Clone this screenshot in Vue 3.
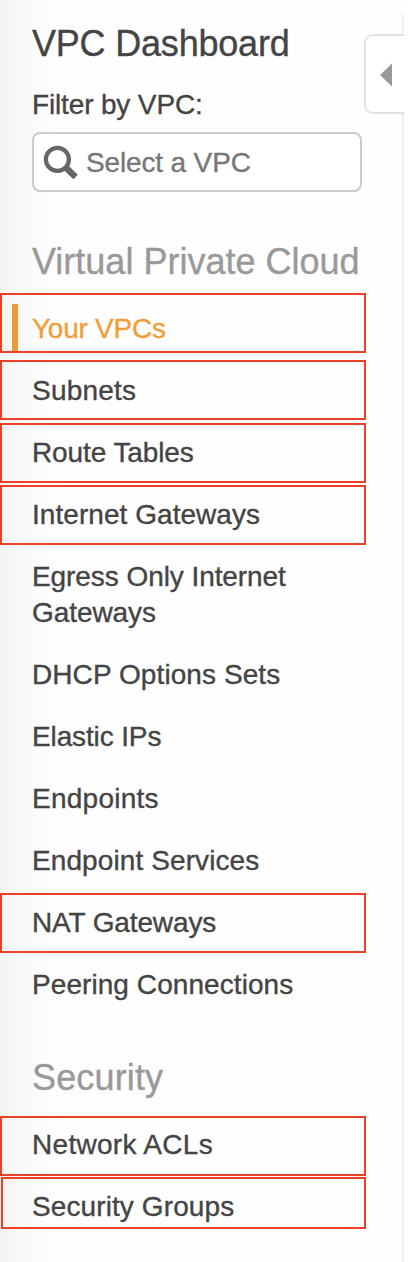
<script setup>
const vpcItems = [
  { label: 'Your VPCs', key: 'vpcs', active: true, marked: true },
  { label: 'Subnets', key: 'subnets', marked: true },
  { label: 'Route Tables', key: 'routes', marked: true },
  { label: 'Internet Gateways', key: 'igw', marked: true },
  { label: 'Egress Only Internet Gateways', key: 'egress' },
  { label: 'DHCP Options Sets', key: 'dhcp' },
  { label: 'Elastic IPs', key: 'eip' },
  { label: 'Endpoints', key: 'endpoints' },
  { label: 'Endpoint Services', key: 'services' },
  { label: 'NAT Gateways', key: 'nat', marked: true },
  { label: 'Peering Connections', key: 'peering' },
]
const securityItems = [
  { label: 'Network ACLs', key: 'acls', marked: true },
  { label: 'Security Groups', key: 'groups', marked: true },
]
const sections = [
  { title: 'Virtual Private Cloud', key: 'cloud', items: vpcItems },
  { title: 'Security', key: 'security', items: securityItems },
]
</script>

<template>
  <div class="page">
    <nav class="sidebar">
      <h1 class="title">VPC Dashboard</h1>
      <label class="filter-label" for="vpc-filter">Filter by VPC:</label>
      <div id="vpc-filter" class="search">
        <svg class="search-icon" width="36" height="36" viewBox="0 0 36 36">
          <circle cx="14.4" cy="14.4" r="11.5" fill="none" stroke="#666" stroke-width="4.2" />
          <path d="M22.6 22.4 L32.6 32" fill="none" stroke="#666" stroke-width="6.4" />
        </svg>
        <span class="placeholder">Select a VPC</span>
      </div>
      <section v-for="s in sections" :key="s.key" :class="s.key">
        <h2 class="heading">{{ s.title }}</h2>
        <ul class="list">
          <li v-for="i in s.items" :key="i.key" class="item" :class="[i.key, { active: i.active }]">
            <span>{{ i.label }}</span>
            <span v-if="i.marked" class="mark"></span>
          </li>
        </ul>
      </section>
    </nav>
    <div class="divider"></div>
    <div class="collapse">
      <svg width="12" height="24" viewBox="0 0 12 24"><path d="M0 12 L12 0.5 V23.5 Z" fill="#999" /></svg>
    </div>
  </div>
</template>

<style>
body { margin: 0; background: #fff; }
</style>

<style scoped>
.page {
  position: relative;
  width: 404px;
  height: 1262px;
  overflow: hidden;
  background: linear-gradient(to right, #f3f3f3 0, #fafafa 26px, #fdfdfd 52px, #fefefe 75px, #fefefe 100%);
  font-family: "Liberation Sans", Arial, sans-serif;
  font-size: 28px;
  line-height: 36px;
  color: #444;
  -webkit-text-stroke-width: 0.35px;
}
.sidebar { padding-top: 21px; }
.title, .heading { margin: 0; padding-left: 32px; font-size: 36px; line-height: 46px; font-weight: 400; white-space: nowrap; }
.title { letter-spacing: -0.2px; }
.filter-label { display: block; margin-top: 20px; padding-left: 32px; letter-spacing: -0.15px; }
.search {
  box-sizing: border-box;
  display: flex;
  align-items: center;
  width: 330px;
  height: 60px;
  margin: 9px 0 0 32px;
  padding: 2px 0 0 9px;
  border: 2px solid #ccc;
  border-radius: 8px;
  background: #fff;
  color: #777;
}
.search-icon { flex: none; }
.placeholder { margin-left: 7px; white-space: nowrap; letter-spacing: -0.15px; }
.heading { color: #999; }
.cloud .heading { margin-top: 47px; }
.security .heading { margin-top: 39px; letter-spacing: 0.15px; }
.list { margin: 13px 0 0; padding: 0; list-style: none; }
.item { position: relative; padding: 13px 80px 13px 32px; }
.vpcs { letter-spacing: -0.25px; }
.subnets { letter-spacing: 0.2px; }
.routes { letter-spacing: -0.1px; }
.igw { letter-spacing: 0.05px; }
.egress { letter-spacing: -0.07px; }
.dhcp { letter-spacing: 0.08px; }
.eip { letter-spacing: -0.13px; }
.endpoints { letter-spacing: 0.25px; }
.services { letter-spacing: 0.1px; }
.nat { letter-spacing: -0.13px; }
.peering { letter-spacing: 0.07px; }
.acls { letter-spacing: 0.3px; }
.groups { letter-spacing: 0.1px; }
.active { color: #f29d38; }
.active::before { content: ""; position: absolute; left: 12px; top: 6px; width: 6px; height: 47px; background: #ec9938; }
.mark { position: absolute; box-sizing: border-box; left: 0; top: 1px; width: 366px; height: 60px; border: 2px solid #ee4026; }
.vpcs .mark { top: -5px; }
.subnets .mark { top: 0; }
.acls .mark { top: 2px; }
.groups .mark { left: 1px; width: 365px; height: 52px; }
.divider { position: absolute; left: 402px; top: 14px; width: 2px; bottom: 0; background: #eee; }
.collapse {
  position: absolute;
  box-sizing: border-box;
  left: 364px;
  top: 34px;
  width: 40px;
  height: 80px;
  padding: 2px 0 0 14px;
  display: flex;
  align-items: center;
  border: 2px solid #e2e2e2;
  border-right: 0;
  border-radius: 9px 0 0 9px;
  background: #fff;
}
</style>
